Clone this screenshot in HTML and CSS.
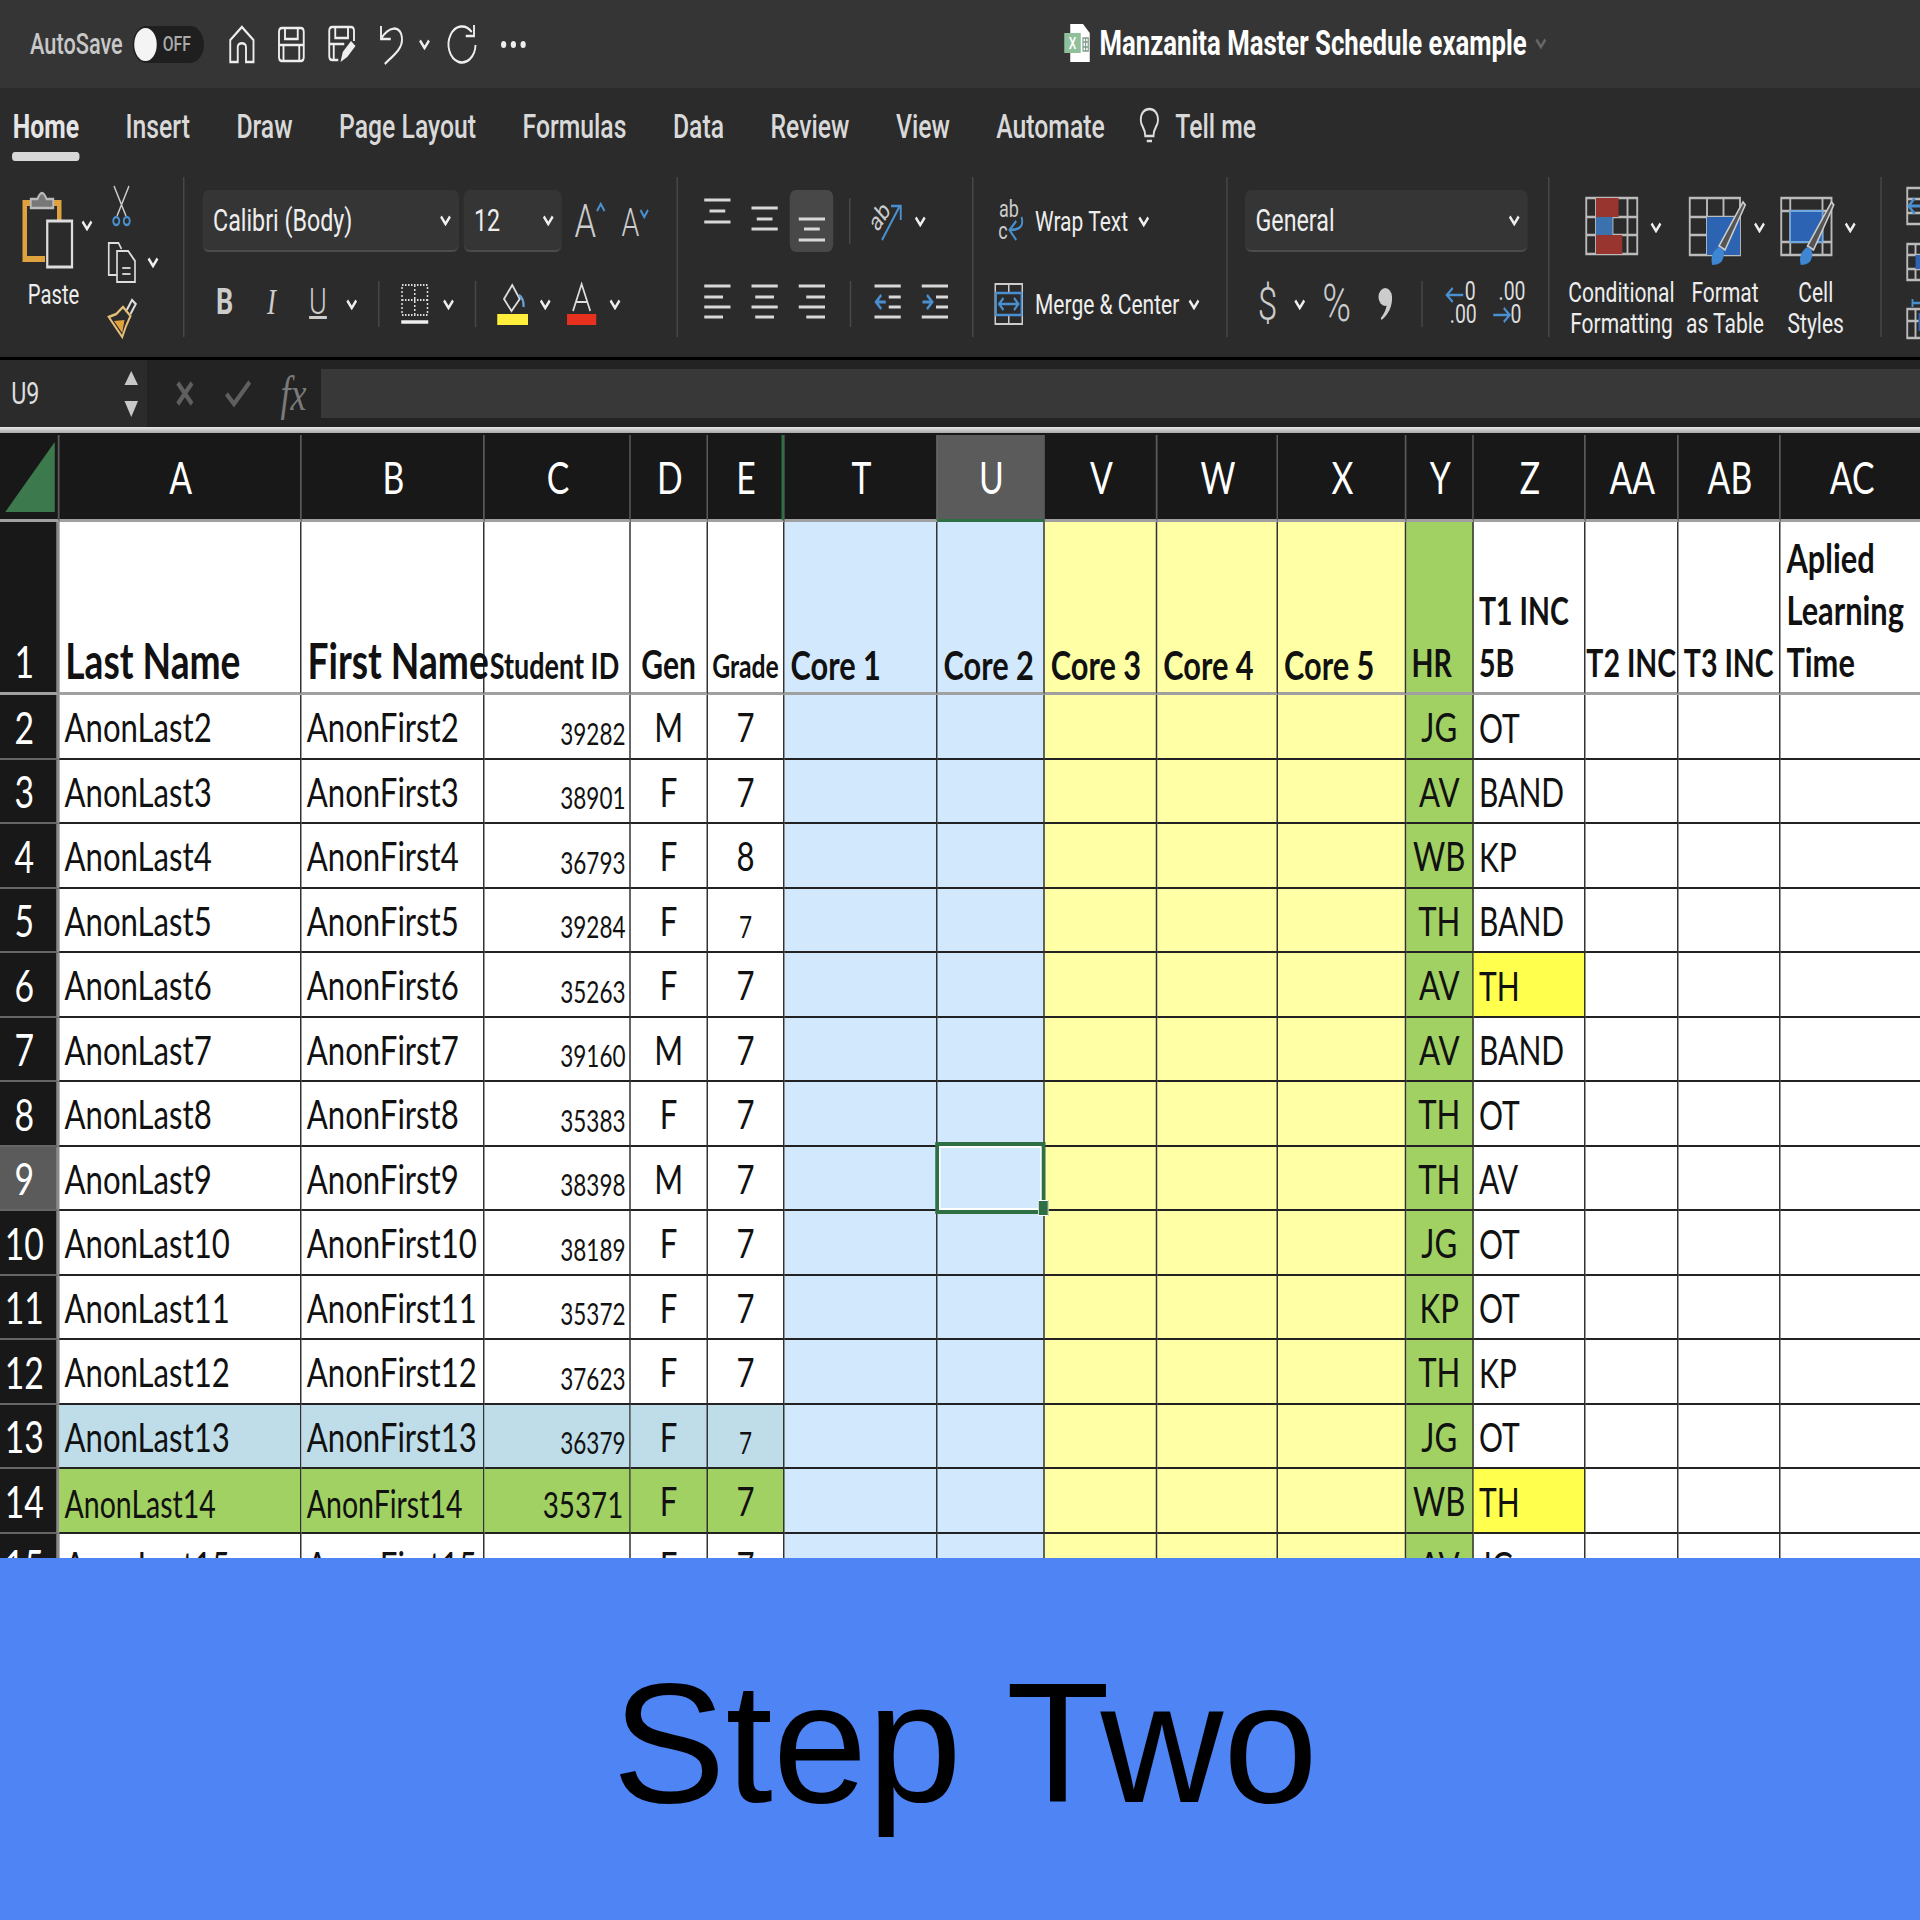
FILE: index.html
```html
<!DOCTYPE html>
<html lang="en">

<head>
  <meta charset="UTF-8" />
  <title>Manzanita Master Schedule example</title>
  <link rel="stylesheet" href="styles.css">
</head>

<body>

  <svg class="defs" width="0" height="0">
    <symbol id="chev" viewBox="0 0 16 11"><path d="M2 1.5 8 9 14 1.5" fill="none" stroke="#eee" stroke-width="3" /></symbol>
  </svg>

  <div class="screen">
    <div class="app">

      <!-- Title bar -->
      <header class="titlebar">
        <span class="autosave">AutoSave</span>
        <span class="toggle"><i class="knob"></i><b>OFF</b></span>
        <svg class="m33" width="35" height="39" viewBox="0 0 35 39"><path d="M2 37V15L17.500 2 33 15V37H23V22C23 17 12 17 12 22V37Z" fill="none" stroke="#eee" stroke-width="2.500" /></svg>
        <svg class="m30" width="37" height="37" viewBox="0 0 37 37"><path d="M2 6Q2 2 6 2H31Q35 2 35 6V31Q35 35 31 35H6Q2 35 2 31ZM10 2V13H27V2M2 19H35M8 19V35M29 19V35" fill="none" stroke="#eee" stroke-width="2.500" /></svg>
        <svg class="m30" width="38" height="39" viewBox="0 0 38 39"><path d="M14 35H6Q2 35 2 31V6Q2 2 6 2H31Q35 2 35 6V16M10 2V13H27V2M2 19H22M8 19V35" fill="none" stroke="#eee" stroke-width="2.500" /><path d="M17 37 20 27 31 16 37 21 26 32Z" fill="#eee" /></svg>
        <svg class="m30" width="33" height="41" viewBox="0 0 33 41"><path d="M3 2V15H16M3 15C11 3 31-1 31 16 31 25 20 31 8 40" fill="none" stroke="#eee" stroke-width="2.500" /></svg>
        <svg class="m20 mini" width="16" height="11"><use href="#chev" /></svg>
        <svg class="m22" width="41" height="41" viewBox="0 0 41 41"><path d="M33 8A18 18 0 1 0 38 21M36 1V12H25" fill="none" stroke="#eee" stroke-width="2.500" /></svg>
        <span class="dots m31"><i></i><i></i><i></i></span>
        <span class="docname">
          <svg width="34" height="38" viewBox="0 0 34 38"><path d="M8 0H25L34 9V38H8Z" fill="#fff" /><rect y="9" width="22" height="20" fill="#8fbf9b" /><text class="docx" x="6" y="25">X</text><path d="M25 14H32V27H25ZM25 18H32M25 23H32M28.500 14V27" fill="none" stroke="#7f9a88" stroke-width="1.500" /></svg>
          <strong>Manzanita Master Schedule example</strong>
          <svg class="docchev" width="19" height="11" viewBox="0 0 16 11"><path d="M2 1.500 8 9 14 1.500" fill="none" stroke="#666" stroke-width="3" /></svg>
        </span>
      </header>

      <!-- Ribbon tabs -->
      <nav class="tabs">
        <a class="active">Home</a>
        <a>Insert</a>
        <a>Draw</a>
        <a>Page Layout</a>
        <a>Formulas</a>
        <a>Data</a>
        <a>Review</a>
        <a>View</a>
        <a>Automate</a>
        <svg class="bulb" width="27" height="39" viewBox="0 0 27 39"><path d="M8 29C8 20 2 20 2 13 2 6 7 2 13.500 2S25 6 25 13C25 20 19 20 19 29ZM10 34H17" fill="none" stroke="#ddd" stroke-width="2.500" /></svg>
        <a class="tell">Tell me</a>
      </nav>

      <!-- Ribbon -->
      <section class="ribbon">

        <div class="group g-clip">
          <div class="paste">
            <div class="paste-top">
              <svg width="67" height="78" viewBox="0 0 67 78">
                <path d="M30 69H3V13H49V30" fill="none" stroke="#e0a23f" stroke-width="6" />
                <path d="M11 18V9H20Q26-3 32 9H41V18Z" fill="#777" stroke="#bbb" stroke-width="2.500" />
                <rect x="33" y="31" width="33" height="46" fill="#2b2b2b" stroke="#ddd" stroke-width="3" />
              </svg>
              <svg class="paste-chev" width="16" height="11"><use href="#chev" /></svg>
            </div>
            <span>Paste</span>
          </div>
          <div class="clip-tools">
            <svg class="cut" width="26" height="41" viewBox="0 0 26 41"><path d="M3 1 19 31M23 1 7 31" fill="none" stroke="#ccc" stroke-width="1.800" /><circle cx="6" cy="36" r="4" fill="none" stroke="#4a90d0" stroke-width="2.500" /><circle cx="20" cy="36" r="4" fill="none" stroke="#4a90d0" stroke-width="2.500" /></svg>
            <div class="copy">
              <svg width="39" height="42" viewBox="0 0 39 42"><path d="M12 34H2V2H15L19 8M13 10H28L37 20V41H13Z" fill="none" stroke="#ddd" stroke-width="2.200" /><path d="M20 27H31M20 33H31" stroke="#ccc" stroke-width="2" /></svg>
              <svg class="m14" width="16" height="11"><use href="#chev" /></svg>
            </div>
            <svg width="39" height="39" viewBox="0 0 39 39"><path d="M26 12 33 2 38 6 31 16" fill="none" stroke="#ddd" stroke-width="2.500" /><path d="M21 9 31 18 25 28 20 39 2 19 12 16Z" fill="#2b2b2b" stroke="#e5c07b" stroke-width="2.500" /><path d="M9 23 23 22 20 35Z" fill="#e0a23f" /></svg>
          </div>
        </div>

        <div class="group g-font">
          <div class="row1 pad24">
            <div class="select w342"><span>Calibri (Body)</span><svg width="16" height="11"><use href="#chev" /></svg></div>
            <div class="select w131 m6"><span>12</span><svg width="16" height="11"><use href="#chev" /></svg></div>
            <span class="bigA m17">A<svg width="12" height="10" viewBox="0 0 12 10"><path d="M1 9 6 2 11 9" fill="none" stroke="#4a90d0" stroke-width="2.500" /></svg></span>
            <span class="smallA m22">A<svg width="12" height="10" viewBox="0 0 12 10"><path d="M1 1 6 8 11 1" fill="none" stroke="#4a90d0" stroke-width="2.500" /></svg></span>
          </div>
          <div class="row2 pad42">
            <span class="fmt w18"><b>B</b></span>
            <span class="fmt w16 m48"><i>I</i></span>
            <span class="fmt w24 m42"><u>U</u></span>
            <svg class="m25" width="16" height="11"><use href="#chev" /></svg>
            <span class="vsep m27"></span>
            <svg class="m28" width="38" height="42" viewBox="0 0 38 42"><path d="M2 2H36V32H2ZM19 2V32M2 17H36" fill="none" stroke="#ddd" stroke-width="2" stroke-dasharray="2 2" /><path d="M1 39H37" stroke="#eee" stroke-width="3.500" /></svg>
            <svg class="m18" width="16" height="11"><use href="#chev" /></svg>
            <span class="vsep m27"></span>
            <svg class="m28" width="41" height="42" viewBox="0 0 41 42"><path d="M20 2 9 16 19 28 30 16Z" fill="none" stroke="#ddd" stroke-width="2.200" /><path d="M29 12Q36 16 35 24" fill="none" stroke="#6aa0d8" stroke-width="3" /><rect y="31" width="41" height="11" fill="#ffef3c" /></svg>
            <svg class="m15" width="16" height="11"><use href="#chev" /></svg>
            <svg class="m21" width="39" height="42" viewBox="0 0 39 42"><path d="M8 28 19.500 1 31 28M12 19H27" fill="none" stroke="#ddd" stroke-width="2.200" /><rect y="31" width="39" height="11" fill="#e8301f" /></svg>
            <svg class="m17" width="16" height="11"><use href="#chev" /></svg>
          </div>
        </div>

        <div class="group g-align">
          <div class="row1 pad35">
            <svg class="lines" width="35" height="62" viewBox="0 0 35 62"><path d="M0 10H35M7 21H28M0 32H35" /></svg>
            <svg class="lines m28" width="35" height="62" viewBox="0 0 35 62"><path d="M0 18H35M7 29H28M0 39H35" /></svg>
            <span class="pressed m16"><svg class="lines" width="35" height="62" viewBox="0 0 35 62"><path d="M0 29H35M7 39H28M0 50H35" /></svg></span>
            <span class="vsep short m21"></span>
            <svg class="m27" width="42" height="39" viewBox="0 0 42 39"><text class="orient" x="0" y="24" transform="rotate(-50 12 18)">ab</text><path d="M15 38 38 5M27 4H40V18" fill="none" stroke="#4a90d0" stroke-width="2.500" /></svg>
            <svg class="m16" width="16" height="11"><use href="#chev" /></svg>
          </div>
          <div class="row2 pad35">
            <svg class="lines" width="35" height="50" viewBox="0 0 35 50"><path d="M0 7H35M0 18H25M0 28H35M0 38H25" /></svg>
            <svg class="lines m28" width="35" height="50" viewBox="0 0 35 50"><path d="M0 7H35M5 18H30M0 28H35M5 38H30" /></svg>
            <svg class="lines m28" width="35" height="50" viewBox="0 0 35 50"><path d="M0 7H35M10 18H35M0 28H35M10 38H35" /></svg>
            <span class="vsep m33"></span>
            <svg class="lines m31" width="35" height="50" viewBox="0 0 35 50"><path d="M0 7H35M19 18H35M19 28H35M0 38H35" /><path class="blue-stroke" d="M15 23H3M9 16 2 23 9 30" /></svg>
            <svg class="lines m28" width="35" height="50" viewBox="0 0 35 50"><path d="M0 7H35M19 18H35M19 28H35M0 38H35" /><path class="blue-stroke" d="M1 23H13M7 16 14 23 7 30" /></svg>
          </div>
        </div>

        <div class="group g-wrap">
          <div class="row1 pad33">
            <svg width="36" height="42" viewBox="0 0 36 42"><text class="abc" x="1" y="17">ab</text><text class="abc" x="0" y="39">c</text><path d="M31 17Q36 30 16 30M24 21 15 30 24 40" fill="none" stroke="#4a90d0" stroke-width="2.500" /></svg>
            <span class="lbl m13">Wrap Text</span>
            <svg class="m13" width="16" height="11"><use href="#chev" /></svg>
          </div>
          <div class="row2 pad28">
            <svg width="38" height="42" viewBox="0 0 38 42"><path d="M1 1H37V41H1ZM1 10H37M1 32H37M19 1V10M19 32V41" fill="none" stroke="#ccc" stroke-width="2" /><rect x="2" y="10" width="34" height="22" fill="#2b2b2b" stroke="#4a90d0" stroke-width="2.500" /><path d="M7 21H31M12 15 6 21 12 27M26 15 32 21 26 27" fill="none" stroke="#4a90d0" stroke-width="2.500" /></svg>
            <span class="lbl m16">Merge &amp; Center</span>
            <svg class="m12" width="16" height="11"><use href="#chev" /></svg>
          </div>
        </div>

        <div class="group g-number">
          <div class="row1 pad23">
            <div class="select w377"><span>General</span><svg width="16" height="11"><use href="#chev" /></svg></div>
          </div>
          <div class="row2 pad40">
            <span class="numfmt w20">$</span>
            <svg class="m28 mini" width="16" height="11"><use href="#chev" /></svg>
            <span class="numfmt w38 m22 pct">%</span>
            <svg class="m36" width="20" height="32" viewBox="0 0 20 32"><circle cx="10" cy="9" r="9" fill="#ccc" /><path d="M13 8H19C20 18 14 27 5 32L4 30C10 25 13 18 13 8Z" fill="#ccc" /></svg>
            <span class="vsep m38"></span>
            <svg class="m30" width="39" height="42" viewBox="0 0 39 42"><text class="dec" x="26" y="17">0</text><text class="dec" x="6" y="40">.00</text><path d="M24 12H3M10 5 2 12 10 19" fill="none" stroke="#4a90d0" stroke-width="2.500" /></svg>
            <svg class="m24" width="39" height="42" viewBox="0 0 39 42"><text class="dec" x="8" y="17">.00</text><text class="dec" x="24" y="40">0</text><path d="M1 32H22M15 25 23 32 15 39" fill="none" stroke="#4a90d0" stroke-width="2.500" /></svg>
          </div>
        </div>

        <div class="group g-styles">
          <div class="stylebtn w144">
            <div class="styleicon">
              <svg width="70" height="58" viewBox="0 0 70 58"><path d="M1 1H69V57H1ZM1 20H69M1 38H69M14 1V57M36 1V57M56 1V57" fill="none" stroke="#bbb" stroke-width="2.500" /><rect x="14" y="1" width="30" height="19" fill="#99352f" /><rect x="14" y="20" width="22" height="18" fill="#3b72ae" /><rect x="14" y="38" width="35" height="19" fill="#99352f" /></svg>
              <svg class="m16 chev-down" width="16" height="11"><use href="#chev" /></svg>
            </div>
            <span>Conditional<br />Formatting</span>
          </div>
          <div class="stylebtn w132">
            <div class="styleicon">
              <svg width="76" height="70" viewBox="0 0 76 70"><path d="M1 1H68V58H1ZM1 20H68M1 38H68M24 1V58M46 1V58" fill="none" stroke="#bbb" stroke-width="2.500" /><rect x="24" y="20" width="44" height="38" fill="#2c63b2" /><path d="M40 49 72 5 75 8 48 53Z" fill="#555" stroke="#ccc" stroke-width="2" /><path d="M31 68Q27 56 40 50 48 52 46 60 44 68 31 68Z" fill="#3e86d2" /></svg>
              <svg class="m10 chev-down" width="16" height="11"><use href="#chev" /></svg>
            </div>
            <span>Format<br />as Table</span>
          </div>
          <div class="stylebtn w110">
            <div class="styleicon">
              <svg width="73" height="70" viewBox="0 0 73 70"><path d="M1 1H68V58H1ZM1 14H68M1 45H68M13 1V58M56 1V58" fill="none" stroke="#bbb" stroke-width="2.500" /><rect x="13" y="14" width="43" height="31" fill="#2c63b2" stroke="#6fa8e0" stroke-width="2" /><path d="M36 49 68 5 71 8 44 53Z" fill="#555" stroke="#ccc" stroke-width="2" /><path d="M27 68Q23 56 36 50 44 52 42 60 40 68 27 68Z" fill="#3e86d2" /></svg>
              <svg class="m12 chev-down" width="16" height="11"><use href="#chev" /></svg>
            </div>
            <span>Cell<br />Styles</span>
          </div>
        </div>

        <div class="cells-tools">
          <svg width="40" height="38" viewBox="0 0 40 38"><path d="M1 1H40V37H1ZM1 12H40M1 26H40" fill="none" stroke="#bbb" stroke-width="2.500" /><path d="M20 19H4M11 11 3 19 11 27" fill="none" stroke="#4a90d0" stroke-width="3" /></svg>
          <svg width="40" height="38" viewBox="0 0 40 38"><path d="M1 1H40V37H1ZM1 12H40M1 26H40M12 1V12M12 26V37" fill="none" stroke="#bbb" stroke-width="2.500" /><rect x="12" y="12" width="28" height="14" fill="#2c63b2" /></svg>
          <svg width="40" height="40" viewBox="0 0 40 40"><path d="M1 10H40V39H1ZM1 22H40M12 10V39" fill="none" stroke="#bbb" stroke-width="2.500" /><path d="M8 4H22M8 0V8" fill="none" stroke="#4a90d0" stroke-width="2.500" /><rect x="16" y="14" width="24" height="18" fill="#2c63b2" /></svg>
        </div>
      </section>

      <!-- Formula bar -->
      <div class="formula">
        <div class="namebox">
          <span>U9</span>
          <span class="spin"><i class="up"></i><i class="down"></i></span>
        </div>
        <svg class="m38" width="25" height="25" viewBox="0 0 25 25"><path d="M3 2 22 23M22 2 3 23" stroke="#5f5f5f" stroke-width="5" /></svg>
        <svg class="m41" width="35" height="27" viewBox="0 0 35 27"><path d="M2 14 12 24 33 2" fill="none" stroke="#5f5f5f" stroke-width="5" /></svg>
        <span class="fx">fx</span>
        <div class="formula-input"></div>
      </div>
      <div class="sheet-edge"></div>

      <!-- Sheet -->
      <div class="sheet">
        <table>
          <colgroup>
            <col class="c-hdr"><col class="c-a"><col class="c-b"><col class="c-c"><col class="c-d"><col class="c-e">
            <col class="c-t"><col class="c-u"><col class="c-v"><col class="c-w"><col class="c-x"><col class="c-y">
            <col class="c-z"><col class="c-aa"><col class="c-ab"><col class="c-ac">
          </colgroup>
          <thead>
            <tr>
              <th class="corner"><svg width="66" height="70" viewBox="0 0 66 70"><path d="M0 70H66V0Z" fill="#3c7a4e" /></svg></th>
              <th>A</th><th>B</th><th>C</th><th>D</th><th class="before-t">E</th>
              <th>T</th><th class="cur">U</th><th>V</th><th>W</th><th>X</th><th>Y</th><th>Z</th><th>AA</th><th>AB</th><th>AC</th>
            </tr>
          </thead>
          <tbody>
            <tr class="head-row">
              <th>1</th>
              <td class="h-lg">Last Name</td><td class="h-lg">First Name</td>
              <td class="h-id">Student ID</td><td class="h-gen ctr">Gen</td><td class="h-sm ctr">Grade</td>
              <td class="h-core">Core 1</td><td class="h-core">Core 2</td><td class="h-core">Core 3</td><td class="h-core">Core 4</td><td class="h-core">Core 5</td>
              <td class="h-md">HR</td><td class="h-md">T1 INC<br />5B</td><td class="h-md tight">T2 INC</td><td class="h-md tight">T3 INC</td><td class="h-apl">Aplied<br />Learning<br />Time</td>
            </tr>
            <tr><th>2</th><td>AnonLast2</td><td>AnonFirst2</td><td class="num">39282</td><td class="ctr">M</td><td class="ctr">7</td><td></td><td></td><td></td><td></td><td></td><td class="ctr">JG</td><td class="inc">OT</td><td></td><td></td><td></td></tr>
            <tr><th>3</th><td>AnonLast3</td><td>AnonFirst3</td><td class="num">38901</td><td class="ctr">F</td><td class="ctr">7</td><td></td><td></td><td></td><td></td><td></td><td class="ctr">AV</td><td class="inc">BAND</td><td></td><td></td><td></td></tr>
            <tr><th>4</th><td>AnonLast4</td><td>AnonFirst4</td><td class="num">36793</td><td class="ctr">F</td><td class="ctr">8</td><td></td><td></td><td></td><td></td><td></td><td class="ctr">WB</td><td class="inc">KP</td><td></td><td></td><td></td></tr>
            <tr><th>5</th><td>AnonLast5</td><td>AnonFirst5</td><td class="num">39284</td><td class="ctr">F</td><td class="ctr small">7</td><td></td><td></td><td></td><td></td><td></td><td class="ctr">TH</td><td class="inc">BAND</td><td></td><td></td><td></td></tr>
            <tr><th>6</th><td>AnonLast6</td><td>AnonFirst6</td><td class="num">35263</td><td class="ctr">F</td><td class="ctr">7</td><td></td><td></td><td></td><td></td><td></td><td class="ctr">AV</td><td class="inc flag">TH</td><td></td><td></td><td></td></tr>
            <tr><th>7</th><td>AnonLast7</td><td>AnonFirst7</td><td class="num">39160</td><td class="ctr">M</td><td class="ctr">7</td><td></td><td></td><td></td><td></td><td></td><td class="ctr">AV</td><td class="inc">BAND</td><td></td><td></td><td></td></tr>
            <tr><th>8</th><td>AnonLast8</td><td>AnonFirst8</td><td class="num">35383</td><td class="ctr">F</td><td class="ctr">7</td><td></td><td></td><td></td><td></td><td></td><td class="ctr">TH</td><td class="inc">OT</td><td></td><td></td><td></td></tr>
            <tr><th class="cur">9</th><td>AnonLast9</td><td>AnonFirst9</td><td class="num">38398</td><td class="ctr">M</td><td class="ctr">7</td><td></td><td class="selected"></td><td></td><td></td><td></td><td class="ctr">TH</td><td class="inc">AV</td><td></td><td></td><td></td></tr>
            <tr><th>10</th><td>AnonLast10</td><td>AnonFirst10</td><td class="num">38189</td><td class="ctr">F</td><td class="ctr">7</td><td></td><td></td><td></td><td></td><td></td><td class="ctr">JG</td><td class="inc">OT</td><td></td><td></td><td></td></tr>
            <tr><th>11</th><td>AnonLast11</td><td>AnonFirst11</td><td class="num">35372</td><td class="ctr">F</td><td class="ctr">7</td><td></td><td></td><td></td><td></td><td></td><td class="ctr">KP</td><td class="inc">OT</td><td></td><td></td><td></td></tr>
            <tr><th>12</th><td>AnonLast12</td><td>AnonFirst12</td><td class="num">37623</td><td class="ctr">F</td><td class="ctr">7</td><td></td><td></td><td></td><td></td><td></td><td class="ctr">TH</td><td class="inc">KP</td><td></td><td></td><td></td></tr>
            <tr class="teal"><th>13</th><td>AnonLast13</td><td>AnonFirst13</td><td class="num">36379</td><td class="ctr">F</td><td class="ctr small">7</td><td></td><td></td><td></td><td></td><td></td><td class="ctr">JG</td><td class="inc">OT</td><td></td><td></td><td></td></tr>
            <tr class="lime"><th>14</th><td>AnonLast14</td><td>AnonFirst14</td><td class="num">35371</td><td class="ctr">F</td><td class="ctr">7</td><td></td><td></td><td></td><td></td><td></td><td class="ctr">WB</td><td class="inc flag">TH</td><td></td><td></td><td></td></tr>
            <tr><th>15</th><td>AnonLast15</td><td>AnonFirst15</td><td class="num"></td><td class="ctr">F</td><td class="ctr">7</td><td></td><td></td><td></td><td></td><td></td><td class="ctr">AV</td><td class="inc">JG</td><td></td><td></td><td></td></tr>
          </tbody>
        </table>
      </div>

    </div>
  </div>

  <!-- Caption -->
  <footer class="banner">Step Two</footer>

</body>

</html>
```

FILE: styles.css
```css
/* The captured window is 2560 wide, squeezed to 1920 */
body {
  margin: 0;
  background: #4f84f5;
  overflow: hidden;
}

.defs {
  position: absolute;
}

.screen {
  height: 1558px;
  overflow: hidden;
}

.app {
  width: 2560px;
  height: 1558px;
  background: #181818;
  font-family: Roboto, sans-serif;
  color: #e2e2e2;
  transform: scaleX(0.75);
  transform-origin: 0 0;
  overflow: hidden;
}

svg {
  flex: none;
  display: block;
  overflow: visible;
}

/* Spacing helpers */
.m6 { margin-left: 6px; }
.m10 { margin-left: 10px; }
.m12 { margin-left: 12px; }
.m13 { margin-left: 13px; }
.m14 { margin-left: 14px; }
.m15 { margin-left: 15px; }
.m16 { margin-left: 16px; }
.m17 { margin-left: 17px; }
.m18 { margin-left: 18px; }
.m20 { margin-left: 20px; }
.m21 { margin-left: 21px; }
.m22 { margin-left: 22px; }
.m24 { margin-left: 24px; }
.m25 { margin-left: 25px; }
.m27 { margin-left: 27px; }
.m28 { margin-left: 28px; }
.m30 { margin-left: 30px; }
.m31 { margin-left: 31px; }
.m33 { margin-left: 33px; }
.m36 { margin-left: 36px; }
.m38 { margin-left: 38px; }
.m41 { margin-left: 41px; }
.m42 { margin-left: 42px; }
.m48 { margin-left: 48px; }

.pad23 { padding-left: 23px; }
.pad24 { padding-left: 24px; }
.pad28 { padding-left: 28px; }
.pad33 { padding-left: 33px; }
.pad35 { padding-left: 35px; }
.pad40 { padding-left: 40px; }
.pad42 { padding-left: 42px; }

/* Title bar */
.titlebar {
  height: 88px;
  box-sizing: border-box;
  padding-left: 40px;
  display: flex;
  align-items: center;
  background: #353535;
  position: relative;
}

.autosave {
  width: 122px;
  font-size: 29px;
  font-weight: 500;
  color: #c8c8c8;
  white-space: nowrap;
}

.toggle {
  margin-left: 15px;
  width: 95px;
  height: 37px;
  border-radius: 19px;
  background: #1f1f1f;
  display: flex;
  align-items: center;
  padding-left: 2px;
  box-sizing: border-box;
}

.knob {
  width: 30px;
  height: 33px;
  border-radius: 50%;
  background: #f4f4f4;
}

.toggle b {
  margin-left: 8px;
  font-size: 21px;
  font-weight: 500;
  color: #aaa;
}

.dots {
  display: flex;
  gap: 6px;
}

.dots i {
  width: 7px;
  height: 7px;
  border-radius: 50%;
  background: #eee;
}

.docname {
  position: absolute;
  left: 1419px;
  top: 23px;
  display: flex;
  align-items: center;
}

.docname strong {
  margin-left: 13px;
  font-size: 34.3px;
  font-weight: 700;
  color: #fff;
  white-space: nowrap;
}

.docx {
  font-size: 16px;
  font-weight: 500;
  fill: #fff;
}

.docchev {
  margin-left: 9px;
}

/* Tabs */
.tabs {
  height: 89px;
  box-sizing: border-box;
  padding: 0 0 12px 17px;
  display: flex;
  align-items: center;
  gap: 62px;
  background: #2b2b2b;
  font-size: 33px;
  font-weight: 500;
  color: #d9d9d9;
}

.tabs a {
  position: relative;
  white-space: nowrap;
}

.tabs .active {
  font-weight: 700;
  color: #e6e6e6;
}

.tabs .active::after {
  content: "";
  position: absolute;
  left: -1px;
  right: -1px;
  bottom: -15px;
  height: 9px;
  border-radius: 4px;
  background: #d8d8d8;
}

.tabs .bulb {
  margin-left: -16px;
}

.tabs .tell {
  margin-left: -41px;
}

/* Ribbon */
.ribbon {
  height: 183px;
  box-sizing: border-box;
  display: flex;
  background: #2b2b2b;
  border-bottom: 3px solid #000;
  font-size: 28px;
  overflow: hidden;
}

.group {
  flex: none;
  height: 160px;
  box-sizing: border-box;
  padding-top: 11px;
  border-right: 2px solid #474747;
}

.row1,
.row2 {
  display: flex;
  align-items: center;
}

.row1 {
  height: 66px;
}

.row2 {
  height: 50px;
  margin-top: 25px;
}

.g-clip { width: 246px; padding-left: 30px; padding-top: 13px; display: flex; }
.g-font { width: 658px; }
.g-align { width: 394px; }
.g-wrap { width: 339px; }
.g-number { width: 429px; }
.g-styles { width: 443px; padding-left: 24px; padding-top: 20px; display: flex; }

.paste {
  width: 113px;
  font-size: 27px;
  color: #eee;
}

.paste-top {
  display: flex;
}

.paste-chev {
  margin: 30px 0 0 11px;
}

.paste span {
  display: block;
  margin: 11px 0 0 7px;
}

.clip-tools {
  display: flex;
  flex-direction: column;
  gap: 15px;
}

.cut {
  margin: -5px 0 0 6px;
}

.copy {
  display: flex;
  align-items: center;
}

.select {
  height: 62px;
  box-sizing: border-box;
  padding: 0 10px 0 14px;
  display: flex;
  align-items: center;
  justify-content: space-between;
  background: #353535;
  border-bottom: 2px solid #4b4b4b;
  border-radius: 8px;
  font-size: 31px;
  color: #eee;
}

.w342 { width: 342px; }
.w131 { width: 131px; }
.w377 { width: 377px; }
.w38 { width: 38px; }
.w24 { width: 24px; }
.w20 { width: 20px; }
.w18 { width: 18px; }
.w16 { width: 16px; }
.w144 { width: 144px; }
.w132 { width: 132px; }
.w110 { width: 110px; }

.bigA,
.smallA {
  display: flex;
  font-weight: 300;
  color: #ccc;
}

.bigA {
  font-size: 46px;
}

.smallA {
  font-size: 38px;
  padding-top: 4px;
}

.bigA svg,
.smallA svg {
  margin-top: 8px;
}

.fmt {
  display: block;
  padding-bottom: 5px;
  line-height: 1;
  font-family: "Liberation Serif", serif;
  font-size: 36px;
  color: #ccc;
  text-align: center;
}

.fmt b {
  font-family: Roboto, sans-serif;
}

.fmt u {
  font-family: Roboto, sans-serif;
  font-weight: 300;
}

.vsep {
  flex: none;
  width: 2px;
  height: 46px;
  background: #474747;
}

.lines path {
  fill: none;
  stroke: #d8d8d8;
  stroke-width: 3;
}

.lines .blue-stroke {
  stroke: #4a90d0;
}

.pressed {
  width: 58px;
  height: 62px;
  display: flex;
  justify-content: center;
  background: #484848;
  border-radius: 8px;
}

.orient {
  font-size: 26px;
  fill: #ccc;
}

.abc {
  font-size: 24px;
  fill: #ccc;
}

.lbl {
  white-space: nowrap;
  color: #eee;
}

.numfmt {
  font-weight: 300;
  font-size: 47px;
  line-height: 50px;
  color: #ccc;
}

.pct {
  font-size: 52px;
}

.dec {
  font-size: 26px;
  fill: #ddd;
}

.stylebtn {
  flex: none;
  display: flex;
  flex-direction: column;
  align-items: center;
  text-align: center;
  line-height: 31px;
  color: #eee;
}

.styleicon {
  flex: none;
  height: 70px;
  margin: 0 0 10px 6px;
  display: flex;
}

.chev-down {
  margin-top: 25px;
}

.cells-tools {
  padding: 10px 0 0 33px;
  display: flex;
  flex-direction: column;
  gap: 18px;
}

/* Formula bar */
.formula {
  height: 67px;
  display: flex;
  align-items: center;
  background: #232323;
}

.namebox {
  width: 196px;
  height: 67px;
  box-sizing: border-box;
  padding: 0 12px 0 15px;
  display: flex;
  align-items: center;
  justify-content: space-between;
  background: #2b2b2b;
  font-size: 31px;
  color: #ddd;
}

.spin {
  display: flex;
  flex-direction: column;
  gap: 16px;
}

.spin i {
  display: block;
  border-left: 9px solid transparent;
  border-right: 9px solid transparent;
}

.spin .up {
  border-bottom: 14px solid #c8c8c8;
}

.spin .down {
  border-top: 16px solid #c8c8c8;
}

.fx {
  margin-left: 39px;
  width: 36px;
  font-family: "Liberation Serif", serif;
  font-style: italic;
  font-size: 48px;
  color: #7a7a7a;
}

.formula-input {
  margin-left: 18px;
  flex: 1;
  height: 49px;
  background: #383838;
}

.sheet-edge {
  height: 6px;
  background: linear-gradient(#e8e8e8, #a8a8a8);
}

/* Sheet */
.sheet {
  margin-top: 2px;
  height: 1123px;
  overflow: hidden;
}

table {
  border-collapse: separate;
  border-spacing: 0;
  table-layout: fixed;
  width: 2564px;
  font-family: Lato, sans-serif;
  font-size: 41.5px;
  color: #111;
  background: #fff;
}

.c-hdr { width: 79px; }
.c-a { width: 323px; }
.c-b { width: 244px; }
.c-c { width: 195px; }
.c-d { width: 103px; }
.c-e { width: 102px; }
.c-t { width: 204px; background: #d2e9fd; }
.c-u { width: 143px; background: #d2e9fd; }
.c-v { width: 150px; background: #ffffa6; }
.c-w { width: 161px; background: #ffffa6; }
.c-x { width: 171px; background: #ffffa6; }
.c-y { width: 90px; background: #a1d063; }
.c-z { width: 149px; }
.c-aa { width: 124px; }
.c-ab { width: 136px; }
.c-ac { width: 190px; }

thead th {
  height: 87px;
  box-sizing: border-box;
  padding: 0 0 0 3px;
  background: #181818;
  color: #fff;
  font-weight: 400;
  font-size: 45px;
  border-right: 2px solid #5a5a5a;
  border-bottom: 3px solid #a0a0a0;
}

thead th.cur {
  background: #5b5b5b;
  border-bottom-color: #2f6f44;
}

thead .before-t {
  border-right: 4px solid #2f6f44;
}

thead .corner {
  padding: 0;
}

.corner svg {
  margin: 0 0 0 7px;
}

tbody tr {
  height: 64.5px;
}

tbody th {
  box-sizing: border-box;
  padding: 0 10px 8px 0;
  background: #181818;
  color: #fff;
  font-weight: 400;
  font-size: 45px;
  line-height: 1;
  vertical-align: bottom;
  border-right: 4px solid #8a8a8a;
  border-bottom: 2px solid #666;
}

tbody th.cur {
  background: #5b5b5b;
}

td {
  box-sizing: border-box;
  padding: 0 0 10px 7px;
  line-height: 1;
  vertical-align: bottom;
  white-space: nowrap;
  border-right: 2px solid #333;
  border-bottom: 2px solid #222;
}

.head-row {
  height: 173px;
}

.head-row td,
.head-row th {
  border-bottom: 3px solid #a0a0a0;
}

.head-row td {
  font-weight: 700;
  padding-bottom: 4px;
  line-height: 52px;
}

.head-row td.h-lg { font-size: 49.5px; padding-bottom: 6px; padding-left: 8px; }
.head-row td.h-id { font-size: 36px; padding-bottom: 1px; }
.head-row td.h-core { font-size: 41px; padding-bottom: 1px; padding-left: 8px; }
.head-row td.h-apl { font-size: 41px; padding-bottom: 4px; padding-left: 8px; }
.head-row td.h-gen { font-size: 40px; padding-bottom: 2px; }
.head-row td.h-md { font-size: 38px; padding-bottom: 4px; }
.head-row td.h-sm { font-size: 33px; padding-bottom: 1px; }

td.tight {
  padding-left: 0;
  text-align: center;
}

td.ctr {
  padding-left: 0;
  text-align: center;
}

td.num {
  padding: 0 5px 10px 0;
  text-align: right;
  font-size: 30px;
}

td.inc {
  font-size: 40px;
}

td.small {
  font-size: 30px;
}

td.flag {
  background: #ffff4d;
}

.teal td:nth-child(-n+6) {
  background: #bedde8;
}

.lime td:nth-child(-n+6) {
  background: #a1d063;
  font-size: 38px;
}

.lime td.ctr {
  font-size: 41.5px;
}

.lime td.num {
  padding-right: 8px;
  font-size: 37px;
}

td.selected {
  position: relative;
}

td.selected::after {
  content: "";
  position: absolute;
  left: -3px;
  top: -5px;
  right: -3px;
  bottom: -5px;
  border: 4px solid #2f6f44;
  border-width: 4px 5px;
  box-shadow: inset 0 0 0 2px #fff;
}

td.selected::before {
  content: "";
  position: absolute;
  z-index: 1;
  right: -7px;
  bottom: -7px;
  width: 12px;
  height: 14px;
  background: #2f6f44;
  border: 1px solid #fff;
}

/* Caption */
.banner {
  height: 362px;
  box-sizing: border-box;
  padding: 8px 0 0 10px;
  display: flex;
  align-items: center;
  justify-content: center;
  font-family: "Liberation Sans", Arial, sans-serif;
  font-size: 170px;
  color: #000;
  background: #4f84f5;
}
```
